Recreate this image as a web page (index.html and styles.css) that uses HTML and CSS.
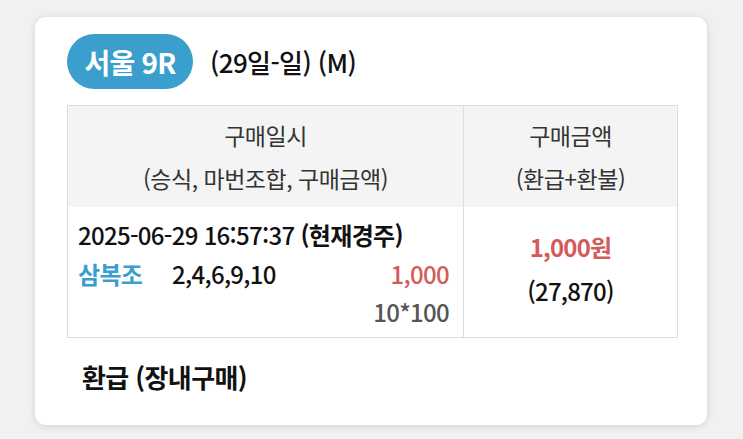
FILE: index.html
```html
<!DOCTYPE html>
<html lang="ko">
<head>
<meta charset="utf-8">
<link rel="stylesheet" href="styles.css">
</head>
<body>
<div class="card">
  <div class="title-row">
    <span class="badge">서울 9R</span>
    <span class="title-info">(29일-일) (M)</span>
  </div>
  <div class="table">
    <div class="th th-left">
      <div>구매일시</div>
      <div>(승식, 마번조합, 구매금액)</div>
    </div>
    <div class="th th-right">
      <div>구매금액</div>
      <div>(환급+환불)</div>
    </div>
    <div class="td td-left">
      <div class="time">2025-06-29 16:57:37 <b>(현재경주)</b></div>
      <div class="bet-row">
        <span class="bet-type">삼복조</span>
        <span class="bet-nums">2,4,6,9,10</span>
        <span class="bet-amt">1,000</span>
      </div>
      <div class="bet-calc">10*100</div>
    </div>
    <div class="td td-right">
      <div class="amt">1,000원</div>
      <div class="refund">(27,870)</div>
    </div>
  </div>
  <div class="footer">환급 (장내구매)</div>
</div>
</body>
</html>
```
FILE: styles.css
```css
html, body {
  margin: 0;
  padding: 0;
}
body {
  background: #f1f1f1;
  font-family: "Noto Sans CJK KR", "Noto Sans", sans-serif;
  color: #1a1a1a;
  width: 743px;
  height: 439px;
  overflow: hidden;
}
.card {
  margin: 17px 0 0 35px;
  width: 672px;
  height: 408px;
  box-sizing: border-box;
  background: #fff;
  border-radius: 11px;
  box-shadow: 0 1px 8px rgba(0,0,0,0.13);
  padding: 17px 31px 0 32px;
}
.title-row {
  display: flex;
  align-items: center;
  gap: 17px;
  height: 55px;
}
.badge {
  display: inline-flex;
  align-items: center;
  justify-content: center;
  width: 126px;
  height: 55px;
  border-radius: 28px;
  background: #3a9fcc;
  color: #fff;
  font-size: 28px;
  font-weight: 700;
  letter-spacing: -0.8px;
}
.title-info {
  font-size: 26px;
  font-weight: 500;
  letter-spacing: -0.6px;
  color: #111;
}
.table {
  margin-top: 16px;
  display: grid;
  grid-template-columns: 396px 213px;
  grid-template-rows: 101px 130px;
  border: 1px solid #dcdcdc;
  width: 609px;
}
.th {
  background: #f4f4f4;
  display: flex;
  flex-direction: column;
  justify-content: center;
  align-items: center;
  font-size: 23px;
  line-height: 43px;
  color: #333;
  letter-spacing: -0.5px;
}
.th-left, .td-left {
  border-right: 1px solid #dcdcdc;
}
.td-left {
  padding: 9px 14px 0 10px;
  font-size: 24px;
  font-weight: 500;
  letter-spacing: -0.7px;
  line-height: 38.5px;
}
.time {
  color: #111;
}
.time b {
  font-weight: 700;
}
.bet-row {
  display: flex;
  align-items: center;
}
.bet-type {
  color: #3a9fcc;
  font-weight: 700;
  width: 94px;
}
.bet-nums {
  flex: 1;
  color: #111;
}
.bet-amt {
  color: #d45b5b;
}
.bet-calc {
  text-align: right;
  color: #555;
}
.td-right {
  display: flex;
  flex-direction: column;
  justify-content: center;
  align-items: center;
  font-size: 24px;
  line-height: 44px;
  letter-spacing: -0.8px;
  padding-bottom: 6px;
}
.amt {
  color: #d45b5b;
  font-weight: 700;
}
.refund {
  color: #111;
  font-weight: 500;
}
.footer {
  margin-top: 20px;
  margin-left: 15px;
  font-size: 26px;
  font-weight: 700;
  letter-spacing: -0.6px;
  color: #111;
}
```
